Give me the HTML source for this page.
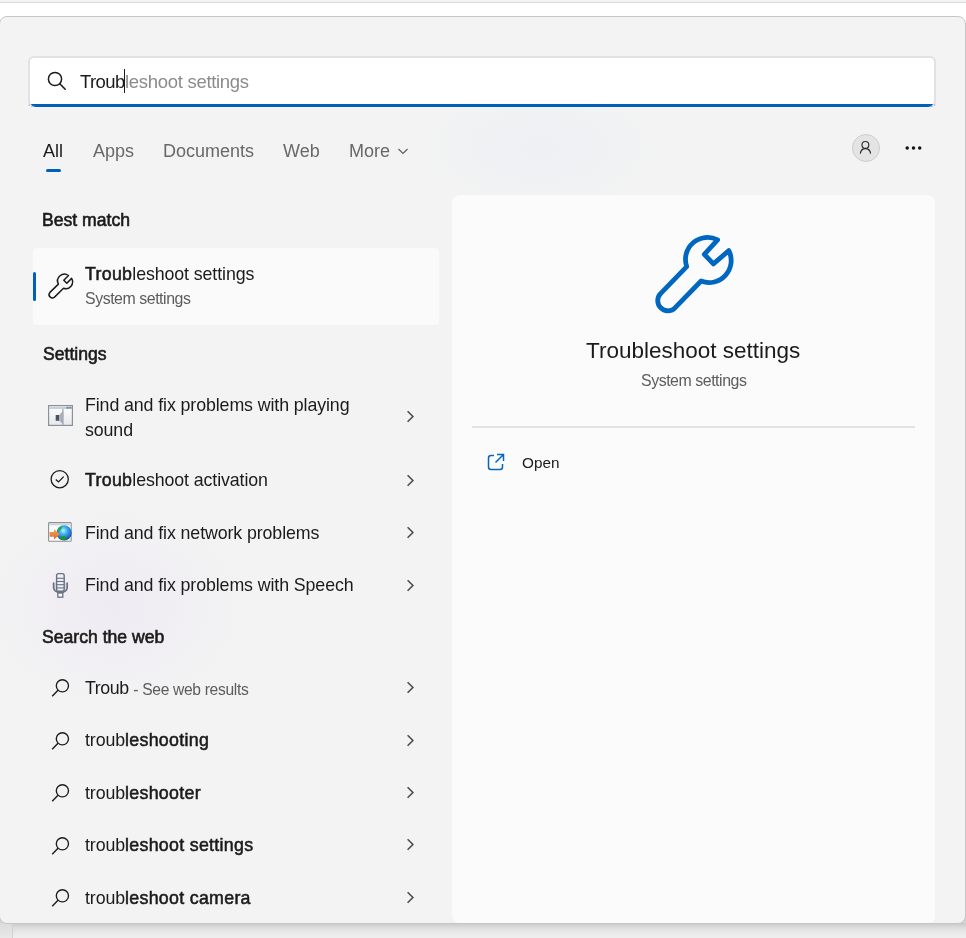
<!DOCTYPE html>
<html><head><meta charset="utf-8">
<style>
html,body{margin:0;padding:0;width:966px;height:938px;overflow:hidden;background:#fff;}
body{position:relative;font-family:"Liberation Sans",sans-serif;color:#1b1b1b;}
.a{position:absolute;}
.t{position:absolute;white-space:nowrap;line-height:1;will-change:transform;}
#topstrip{left:0;top:0;width:966px;height:2px;background:#f3f3f3;}
#topline{left:0;top:2px;width:966px;height:1px;background:#d5dadf;}
#below{left:0;top:912px;width:966px;height:26px;background:linear-gradient(#d4d4d4 0,#d4d4d4 11px,#c8c8c8 11px,#dedede 16px,#ebebeb 22px,#efefef);}
#belowl{left:0;top:923px;width:12px;height:15px;background:linear-gradient(#dcdcdc,#e8e8e8);}
#belowline{left:12px;top:923px;width:1px;height:15px;background:#d0d0d0;}
#panel{left:-1px;top:16px;width:965px;height:906px;border:1px solid #c6c6c6;border-radius:8px;background:radial-gradient(ellipse 130px 100px at 115px 590px, rgba(215,190,245,0.16), rgba(215,190,245,0) 100%), radial-gradient(ellipse 130px 65px at 540px 130px, rgba(190,215,250,0.11), rgba(190,215,250,0) 100%), #f3f3f3;overflow:hidden;}
#search{left:28px;top:56px;width:904px;height:48px;border:2px solid #e2e2e2;border-bottom:0;border-radius:6px 6px 0 0;background:#fff;}
#searchb{left:28px;top:101px;width:908px;height:6px;border-radius:0 0 6px 6px;background:linear-gradient(#fff 0,#fff 50%,#005fb8 50%);box-shadow:inset 2px 0 0 #e2e2e2, inset -2px 0 0 #e2e2e2;}
.blue{color:#005fb8}
.gray{color:#686868}
.sec{color:#5c5c5c}
.b{-webkit-text-stroke:0.6px #1b1b1b}
.sb{-webkit-text-stroke:0.45px #1b1b1b}
b{font-weight:normal;-webkit-text-stroke:0.55px #1b1b1b;letter-spacing:0.3px}
.chev{position:absolute;left:406px;width:9px;height:13px;}
</style></head>
<body>
<div class="a" id="topstrip"></div>
<div class="a" id="topline"></div>
<div class="a" id="below"></div>
<div class="a" id="belowl"></div>
<div class="a" id="belowline"></div>
<div class="a" id="panel"></div>

<div class="a" id="search"></div>
<div class="a" id="searchb"></div>
<!-- search icon -->
<svg class="a" style="left:46px;top:70px" width="22" height="22" viewBox="0 0 22 22"><circle cx="9" cy="9" r="6.6" fill="none" stroke="#1b1b1b" stroke-width="1.5"/><line x1="13.8" y1="13.8" x2="19.2" y2="19.2" stroke="#1b1b1b" stroke-width="1.6" stroke-linecap="round"/></svg>
<div class="t" style="left:79.6px;top:73.3px;font-size:18.5px;letter-spacing:-0.3px"><span style="color:#1b1b1b;letter-spacing:-0.6px">Troub</span><span style="color:#8b8b8b;margin-left:0.4px">leshoot settings</span></div>
<div class="a" style="left:124px;top:69px;width:1px;height:24px;background:#1b1b1b"></div>

<!-- tabs -->
<div class="t" style="left:43px;top:141.6px;font-size:18px;color:#1b1b1b">All</div>
<div class="a" style="left:46px;top:169px;width:15px;height:3px;border-radius:2px;background:#005fb8"></div>
<div class="t gray" style="left:93px;top:141.6px;font-size:18px">Apps</div>
<div class="t gray" style="left:163px;top:141.6px;font-size:18px">Documents</div>
<div class="t gray" style="left:283px;top:141.6px;font-size:18px">Web</div>
<div class="t gray" style="left:349px;top:141.6px;font-size:18px">More</div>
<svg class="a" style="left:397px;top:147px" width="12" height="9" viewBox="0 0 12 9"><polyline points="1.5,2 6,6.5 10.5,2" fill="none" stroke="#5f5f5f" stroke-width="1.2"/></svg>

<!-- avatar / ellipsis -->
<div class="a" style="left:852px;top:133.5px;width:26px;height:26px;border-radius:50%;background:#e4e4e4;border:1px solid #cdcdcd"></div>
<svg class="a" style="left:857px;top:139px" width="18" height="18" viewBox="0 0 18 18"><circle cx="8.4" cy="5.9" r="3.4" fill="none" stroke="#2b2b2b" stroke-width="1.15"/><path d="M3.3 14.6 C3.8 11 6 9.6 8.45 9.6 C10.9 9.6 13.1 11 13.6 14.6" fill="none" stroke="#2b2b2b" stroke-width="1.15"/></svg>
<svg class="a" style="left:900px;top:140px" width="26" height="16" viewBox="0 0 26 16"><circle cx="7.2" cy="8" r="1.75" fill="#111"/><circle cx="13.5" cy="8" r="1.75" fill="#111"/><circle cx="19.7" cy="8" r="1.75" fill="#111"/></svg>

<!-- best match -->
<div class="t b" style="left:41.5px;top:212.4px;font-size:17.6px;letter-spacing:0px">Best match</div>
<div class="a" style="left:33px;top:248px;width:406px;height:77px;border-radius:4px;background:#fafafa"></div>
<div class="a" style="left:33px;top:272px;width:3px;height:29px;border-radius:2px;background:#005fb8"></div>
<svg class="a" style="left:42px;top:268px" width="36" height="36" viewBox="0 0 36 36"><path d="M26.5 7.5 L21.8 12.2 L24.8 15.2 L29.6 10.4 A6.8 6.8 0 0 1 21.5 20.3 L12.5 29.1 A3.3 3.3 0 0 1 7.9 24.4 L16.4 16.1 A6.8 6.8 0 0 1 26.5 7.5 Z" fill="none" stroke="#1b1b1b" stroke-width="1.5" stroke-linejoin="round"/></svg>
<div class="t" style="left:85px;top:265.6px;font-size:17.8px;letter-spacing:-0.1px"><b>Troub</b>leshoot settings</div>
<div class="t sec" style="left:84.5px;top:290.6px;font-size:15.9px;letter-spacing:-0.45px">System settings</div>

<!-- settings -->
<div class="t b" style="left:42.5px;top:346.0px;font-size:17.6px;letter-spacing:0px">Settings</div>
<div class="t" style="left:85px;top:395.6px;font-size:17.8px;line-height:25.2px;white-space:normal;width:290px;letter-spacing:-0.1px;top:392.8px">Find and fix problems with playing sound</div>
<div class="t" style="left:85px;top:471.6px;font-size:17.8px;letter-spacing:-0.1px"><b>Troub</b>leshoot activation</div>
<div class="t" style="left:85px;top:525.2px;font-size:17.8px;letter-spacing:-0.1px">Find and fix network problems</div>
<div class="t" style="left:85px;top:576.6px;font-size:17.8px;letter-spacing:-0.1px">Find and fix problems with Speech</div>

<!-- search the web -->
<div class="t b" style="left:42.3px;top:629.0px;font-size:17.6px;letter-spacing:0px">Search the web</div>
<div class="t" style="left:85px;top:680.2px;font-size:17.8px;letter-spacing:-0.4px">Troub <span class="sec" style="font-size:15.6px;letter-spacing:-0.32px;position:relative;top:0.6px">- See web results</span></div>
<div class="t" style="left:85px;top:732.2px;font-size:17.8px;letter-spacing:-0.1px">troub<b>leshooting</b></div>
<div class="t" style="left:85px;top:784.6px;font-size:17.8px;letter-spacing:-0.1px">troub<b>leshooter</b></div>
<div class="t" style="left:85px;top:836.9px;font-size:17.8px;letter-spacing:-0.1px">troub<b>leshoot settings</b></div>
<div class="t" style="left:85px;top:889.6px;font-size:17.8px;letter-spacing:-0.1px">troub<b>leshoot camera</b></div>


<!-- settings icons -->
<svg class="a" style="left:48px;top:405px" width="25" height="21" viewBox="0 0 25 21">
<defs><linearGradient id="wg" x1="0" y1="0" x2="0" y2="1"><stop offset="0" stop-color="#ffffff"/><stop offset="1" stop-color="#e6e8ec"/></linearGradient>
<linearGradient id="cg" x1="0" y1="0" x2="1" y2="0"><stop offset="0" stop-color="#c9cdd2"/><stop offset="1" stop-color="#8e949c"/></linearGradient></defs>
<rect x="0.6" y="0.6" width="23.8" height="19.8" fill="url(#wg)" stroke="#8d9197" stroke-width="1.2"/>
<rect x="1.2" y="1.6" width="22.6" height="2.4" fill="#c9cfd8"/>
<rect x="18.6" y="1.8" width="1.2" height="1.8" fill="#5a74a0"/><rect x="20.4" y="1.8" width="1.2" height="1.8" fill="#5a74a0"/><rect x="22.2" y="1.8" width="1.2" height="1.8" fill="#5a74a0"/>
<polygon points="11,10 15.2,6 15.2,19.2 11,15.8" fill="url(#cg)"/>
<rect x="7.7" y="10" width="3.5" height="5.8" fill="#4c525b"/>
<rect x="14.2" y="4" width="1.4" height="16" fill="#a9b0ba"/>
</svg>
<svg class="a" style="left:44px;top:464px" width="32" height="32" viewBox="0 0 32 32"><circle cx="15.7" cy="15.2" r="8.6" fill="none" stroke="#1b1b1b" stroke-width="1.3"/><polyline points="11.8,15.4 14.5,17.9 19.7,12.6" fill="none" stroke="#1b1b1b" stroke-width="1.3"/></svg>
<svg class="a" style="left:44px;top:516px" width="32" height="32" viewBox="0 0 32 32">
<defs><radialGradient id="gg" cx="0.45" cy="0.35" r="0.7"><stop offset="0" stop-color="#b8f4ff"/><stop offset="0.35" stop-color="#3cb4f0"/><stop offset="1" stop-color="#1638b0"/></radialGradient>
<linearGradient id="og" x1="0" y1="0" x2="0" y2="1"><stop offset="0" stop-color="#f6a060"/><stop offset="1" stop-color="#e06a2a"/></linearGradient></defs>
<rect x="4.6" y="6.6" width="22.6" height="18.6" rx="0.8" fill="#fbfbfb" stroke="#8d9197" stroke-width="1.1"/>
<rect x="5.2" y="7.3" width="21.4" height="2" fill="#cdd3dc"/>
<circle cx="20.1" cy="16.9" r="7.6" fill="url(#gg)"/>
<path d="M13.5 15 C14 12 16 10.5 18 10 C18.5 12 16.5 14 14.5 16 Z" fill="#22b030"/>
<path d="M16 21 C18 19.5 21 20 23.5 22 C22 24 19 24.5 16.8 23.5 Z" fill="#1a9a28"/>
<path d="M5.6 16 H10 V13 L15.8 18.4 L10 23.6 V20.8 H5.6 Z" fill="url(#og)"/>
</svg>
<svg class="a" style="left:44px;top:569px" width="32" height="32" viewBox="0 0 32 32">
<path d="M9.6 13.6 V18.6 C9.6 21.5 12.5 23.6 16.4 23.6 C20.3 23.6 23.2 21.5 23.2 18.6 V13.6" fill="#d8dcea" stroke="#6c7282" stroke-width="1.7"/>
<rect x="12.6" y="4.6" width="7.6" height="17.6" rx="2" fill="#eef0f8" stroke="#6c7282" stroke-width="1.4"/>
<line x1="12.6" y1="9.3" x2="20.2" y2="9.3" stroke="#6c7282" stroke-width="1.1"/>
<line x1="12.6" y1="12.5" x2="20.2" y2="12.5" stroke="#6c7282" stroke-width="1.1"/>
<line x1="12.6" y1="15.7" x2="20.2" y2="15.7" stroke="#6c7282" stroke-width="1.1"/>
<line x1="12.6" y1="18.9" x2="20.2" y2="18.9" stroke="#6c7282" stroke-width="1.1"/>
<rect x="13.8" y="24" width="5" height="4.2" fill="#fafafa" stroke="#6c7282" stroke-width="1.3"/>
</svg>
<svg class="a" style="left:44px;top:672px" width="32" height="32" viewBox="0 0 32 32"><circle cx="18.4" cy="13.8" r="6.1" fill="none" stroke="#1b1b1b" stroke-width="1.35"/><line x1="14" y1="18.3" x2="8.2" y2="24.3" stroke="#1b1b1b" stroke-width="1.4"/></svg>
<svg class="a" style="left:44px;top:724.5px" width="32" height="32" viewBox="0 0 32 32"><circle cx="18.4" cy="13.8" r="6.1" fill="none" stroke="#1b1b1b" stroke-width="1.35"/><line x1="14" y1="18.3" x2="8.2" y2="24.3" stroke="#1b1b1b" stroke-width="1.4"/></svg>
<svg class="a" style="left:44px;top:777px" width="32" height="32" viewBox="0 0 32 32"><circle cx="18.4" cy="13.8" r="6.1" fill="none" stroke="#1b1b1b" stroke-width="1.35"/><line x1="14" y1="18.3" x2="8.2" y2="24.3" stroke="#1b1b1b" stroke-width="1.4"/></svg>
<svg class="a" style="left:44px;top:829.5px" width="32" height="32" viewBox="0 0 32 32"><circle cx="18.4" cy="13.8" r="6.1" fill="none" stroke="#1b1b1b" stroke-width="1.35"/><line x1="14" y1="18.3" x2="8.2" y2="24.3" stroke="#1b1b1b" stroke-width="1.4"/></svg>
<svg class="a" style="left:44px;top:882px" width="32" height="32" viewBox="0 0 32 32"><circle cx="18.4" cy="13.8" r="6.1" fill="none" stroke="#1b1b1b" stroke-width="1.35"/><line x1="14" y1="18.3" x2="8.2" y2="24.3" stroke="#1b1b1b" stroke-width="1.4"/></svg>
<svg class="a" style="left:400px;top:407.95px" width="20" height="17" viewBox="0 0 20 17"><polyline points="7.6,3.2 12.9,8.45 7.6,13.7" fill="none" stroke="#4d4d4d" stroke-width="1.6"/></svg>
<svg class="a" style="left:400px;top:472.15px" width="20" height="17" viewBox="0 0 20 17"><polyline points="7.6,3.2 12.9,8.45 7.6,13.7" fill="none" stroke="#4d4d4d" stroke-width="1.6"/></svg>
<svg class="a" style="left:400px;top:524.15px" width="20" height="17" viewBox="0 0 20 17"><polyline points="7.6,3.2 12.9,8.45 7.6,13.7" fill="none" stroke="#4d4d4d" stroke-width="1.6"/></svg>
<svg class="a" style="left:400px;top:576.75px" width="20" height="17" viewBox="0 0 20 17"><polyline points="7.6,3.2 12.9,8.45 7.6,13.7" fill="none" stroke="#4d4d4d" stroke-width="1.6"/></svg>
<svg class="a" style="left:400px;top:679.15px" width="20" height="17" viewBox="0 0 20 17"><polyline points="7.6,3.2 12.9,8.45 7.6,13.7" fill="none" stroke="#4d4d4d" stroke-width="1.6"/></svg>
<svg class="a" style="left:400px;top:731.55px" width="20" height="17" viewBox="0 0 20 17"><polyline points="7.6,3.2 12.9,8.45 7.6,13.7" fill="none" stroke="#4d4d4d" stroke-width="1.6"/></svg>
<svg class="a" style="left:400px;top:783.85px" width="20" height="17" viewBox="0 0 20 17"><polyline points="7.6,3.2 12.9,8.45 7.6,13.7" fill="none" stroke="#4d4d4d" stroke-width="1.6"/></svg>
<svg class="a" style="left:400px;top:836.25px" width="20" height="17" viewBox="0 0 20 17"><polyline points="7.6,3.2 12.9,8.45 7.6,13.7" fill="none" stroke="#4d4d4d" stroke-width="1.6"/></svg>
<svg class="a" style="left:400px;top:888.55px" width="20" height="17" viewBox="0 0 20 17"><polyline points="7.6,3.2 12.9,8.45 7.6,13.7" fill="none" stroke="#4d4d4d" stroke-width="1.6"/></svg>

<!-- right panel -->
<div class="a" style="left:452px;top:195px;width:483px;height:728px;border-radius:8px 8px 6px 8px;background:#fbfbfb"></div>
<svg class="a" style="left:643px;top:225px" width="100" height="100" viewBox="0 0 100 100"><path d="M74.6 14.9 L61.3 29.3 L70.4 38.9 L85.8 25.6 A22 22 0 0 1 58.1 56 L31.7 83.2 A10.2 10.2 0 0 1 17.3 68.8 L43.7 41.6 A22 22 0 0 1 74.6 14.9 Z" fill="none" stroke="#0067c0" stroke-width="4.8" stroke-linejoin="round"/></svg>
<div class="t" style="left:586px;top:340.3px;font-size:22.5px">Troubleshoot settings</div>
<div class="t sec" style="left:640.5px;top:372.6px;font-size:15.9px;letter-spacing:-0.45px">System settings</div>
<div class="a" style="left:472px;top:426px;width:443px;height:2px;background:#e2e2e2"></div>
<svg class="a" style="left:486px;top:452px" width="20" height="20" viewBox="0 0 20 20"><path d="M8 3.5 H5 A2.5 2.5 0 0 0 2.5 6 V15 A2.5 2.5 0 0 0 5 17.5 H14 A2.5 2.5 0 0 0 16.5 15 V12 M11 2.5 H17.5 V9 M17.5 2.5 L9.5 10.5" fill="none" stroke="#0067c0" stroke-width="1.5"/></svg>
<div class="t" style="left:522px;top:455.4px;font-size:15.3px">Open</div>

</body></html>
